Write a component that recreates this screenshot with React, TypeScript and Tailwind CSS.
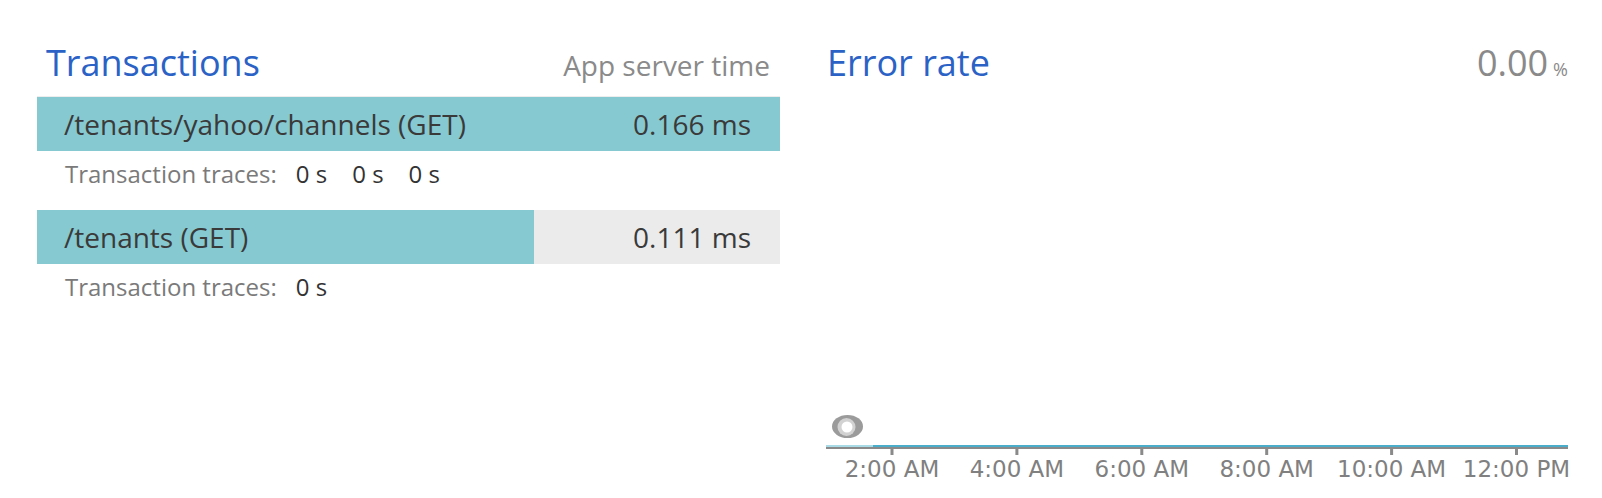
const rows = [
  {
    name: '/tenants/yahoo/channels (GET)',
    time: 0.166,
    traces: ['0 s', '0 s', '0 s'],
  },
  {
    name: '/tenants (GET)',
    time: 0.111,
    traces: ['0 s'],
  },
];

const maxTime = Math.max(...rows.map((r) => r.time));

const ticks = ['2:00 AM', '4:00 AM', '6:00 AM', '8:00 AM', '10:00 AM', '12:00 PM'];

function TimeAxis() {
  return (
    <svg width="742" height="88" className="block overflow-visible">
      {/* range handle */}
      <ellipse cx="21.5" cy="16.5" rx="15.5" ry="11.5" fill="#9b9b9b" />
      <circle cx="20.5" cy="17" r="9" fill="#d2d2d2" />
      <circle cx="21" cy="17" r="5.5" fill="#ffffff" />

      <rect x="0" y="35" width="47" height="2" fill="#a9dbe7" />
      <rect x="47" y="35" width="695" height="2" fill="#4aaecb" />
      <rect x="0" y="37" width="742" height="2" fill="#8a8a8a" />

      {ticks.map((label, i) => {
        const x = 66 + i * 124.9;
        return (
          <g key={label}>
            <rect x={x - 1.5} y="39" width="3" height="6" fill="#8a8a8a" />
            <text
              x={x}
              y="67"
              textAnchor="middle"
              fontSize="23"
              fill="#808080"
              style={{ fontFamily: '"DejaVu Sans", Verdana, sans-serif' }}
            >
              {label}
            </text>
          </g>
        );
      })}
    </svg>
  );
}

export default function App() {
  return (
    <div className="flex h-[498px] bg-white pl-[37px] pr-[34px] pt-[45px] font-['Open_Sans',sans-serif]">
      {/* Transactions */}
      <div className="w-[743px] shrink-0">
        <div className="flex items-baseline justify-between pl-[9px] pr-[10px]">
          <h2 className="text-[36px] leading-none text-[#2b62c6]">Transactions</h2>
          <span className="text-[28px] leading-none text-[#8a8a8a]">App server time</span>
        </div>

        <div className="mt-[15px] border-t border-[#ededed]">
          {rows.map((row) => (
            <div key={row.name}>
              <div className="relative h-[54px] bg-[#ebebeb]">
                <div
                  className="absolute inset-y-0 left-0 bg-[#86c9d1]"
                  style={{ width: `${(row.time / maxTime) * 100}%` }}
                />
                <div className="relative flex h-full items-center justify-between pl-[27px] pr-[29px] text-[28px] text-[#3a3a3a]">
                  <span>{row.name}</span>
                  <span>{row.time.toFixed(3)} ms</span>
                </div>
              </div>
              <div className="mb-[13px] flex h-[46px] items-center pl-[28px] text-[24px]">
                <span className="text-[#7a7a7a]">Transaction traces:</span>
                <div className="ml-[19px] flex gap-[25px] text-[#333333]">
                  {row.traces.map((t, i) => (
                    <span key={i}>{t}</span>
                  ))}
                </div>
              </div>
            </div>
          ))}
        </div>
      </div>

      {/* Error rate */}
      <div className="ml-[46px] flex flex-1 flex-col">
        <div className="flex items-baseline justify-between pl-[1px]">
          <h2 className="text-[36px] leading-none text-[#2b62c6]">Error rate</h2>
          <div className="flex items-baseline text-[#8a8a8a]">
            <span className="text-[36px] leading-none">0.00</span>
            <span className="ml-[5px] text-[18px] leading-none">%</span>
          </div>
        </div>
        <div className="flex-1" />
        <TimeAxis />
      </div>
    </div>
  );
}
